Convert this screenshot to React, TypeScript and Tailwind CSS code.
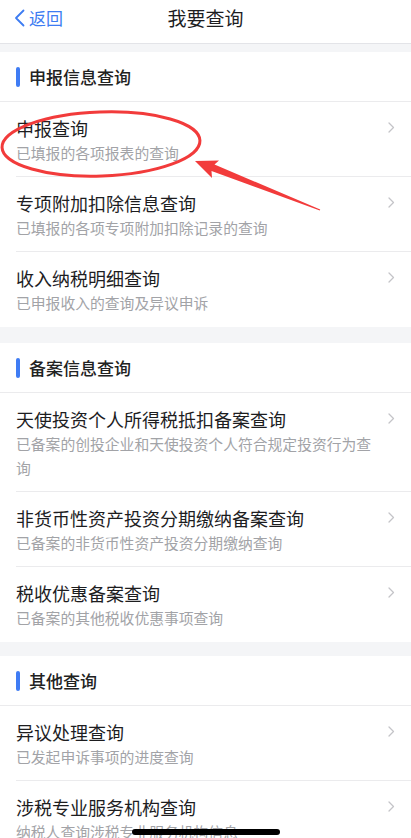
import React from "react";

type Item = { title: string; sub: string };
type Section = { title: string; items: Item[] };

const sections: Section[] = [
  {
    title: "申报信息查询",
    items: [
      { title: "申报查询", sub: "已填报的各项报表的查询" },
      { title: "专项附加扣除信息查询", sub: "已填报的各项专项附加扣除记录的查询" },
      { title: "收入纳税明细查询", sub: "已申报收入的查询及异议申诉" },
    ],
  },
  {
    title: "备案信息查询",
    items: [
      { title: "天使投资个人所得税抵扣备案查询", sub: "已备案的创投企业和天使投资个人符合规定投资行为查询" },
      { title: "非货币性资产投资分期缴纳备案查询", sub: "已备案的非货币性资产投资分期缴纳查询" },
      { title: "税收优惠备案查询", sub: "已备案的其他税收优惠事项查询" },
    ],
  },
  {
    title: "其他查询",
    items: [
      { title: "异议处理查询", sub: "已发起申诉事项的进度查询" },
      { title: "涉税专业服务机构查询", sub: "纳税人查询涉税专业服务机构信息" },
    ],
  },
];

function Chevron() {
  return (
    <svg width="7" height="11" viewBox="0 0 7 11" className="mt-[7px] ml-[10px] shrink-0">
      <path d="M1 1 L5.5 5.5 L1 10" fill="none" stroke="#c4c4c8" strokeWidth="1.3" strokeLinecap="round" strokeLinejoin="round" />
    </svg>
  );
}

function Row({ item, last }: { item: Item; last: boolean }) {
  return (
    <div className="pl-4">
      <div className={`flex items-start pr-4 pt-[13px] ${last ? "pb-[12px]" : "pb-[11px] border-b border-[#ebebed]"}`}>
        <div className="flex-1 min-w-0">
          <div className="text-[18px] leading-[26px] text-[#1d1d1f]">{item.title}</div>
          <div className="text-[14.8px] leading-[24px] text-[#a2a3a7]">{item.sub}</div>
        </div>
        <Chevron />
      </div>
    </div>
  );
}

function SectionBlock({ s, first }: { s: Section; first: boolean }) {
  return (
    <div className={`bg-white ${first ? "mb-[2px]" : ""}`}>
      <div className="h-[50px] flex items-center px-4 border-b border-[#ebebed]">
        <div className="w-1 h-5 rounded-full bg-[#3f7cf4]" />
        <div className="ml-[9px] text-[17px] font-medium text-[#222]">{s.title}</div>
      </div>
      {s.items.map((it, i) => (
        <Row key={i} item={it} last={i === s.items.length - 1} />
      ))}
    </div>
  );
}

export default function App() {
  return (
    <div
      className="relative w-[411px] h-[838px] overflow-hidden bg-[#f4f5f7]"
      style={{ fontFamily: '"Noto Sans CJK SC", "Noto Sans", sans-serif' }}
    >
      <div className="h-[44px] bg-white border-b border-[#e3e4e8] relative flex items-center justify-center pb-[7px]">
        <div className="absolute left-[13px] top-0 h-[36px] flex items-center">
          <svg width="13" height="18" viewBox="0 0 13 18">
            <path d="M10.5 1.5 L3 9 L10.5 16.5" fill="none" stroke="#3d7cf2" strokeWidth="1.8" strokeLinecap="round" strokeLinejoin="round" />
          </svg>
          <span className="ml-[3px] text-[17px] text-[#3d7cf2]">返回</span>
        </div>
        <div className="text-[19px] text-[#1d1d1f]">我要查询</div>
      </div>
      <div className="flex flex-col gap-[14px] pt-2">
        {sections.map((s, i) => (
          <SectionBlock key={i} s={s} first={i === 0} />
        ))}
      </div>

      {/* annotation */}
      <svg className="absolute left-0 top-0 pointer-events-none" width="411" height="838">
        <ellipse cx="101" cy="144" rx="99" ry="32" fill="none" stroke="#f23b3b" strokeWidth="3" transform="rotate(-2 101 144)" />
        <polygon
          points="195,161 219,160.5 214.5,164.5 320.2,209.5 319.8,210.5 211.5,171 212,178"
          fill="#f23b3b"
        />
      </svg>

      {/* home indicator */}
      <div className="absolute left-[132px] bottom-[3px] w-[148px] h-[6px] rounded-full bg-black" />
    </div>
  );
}
